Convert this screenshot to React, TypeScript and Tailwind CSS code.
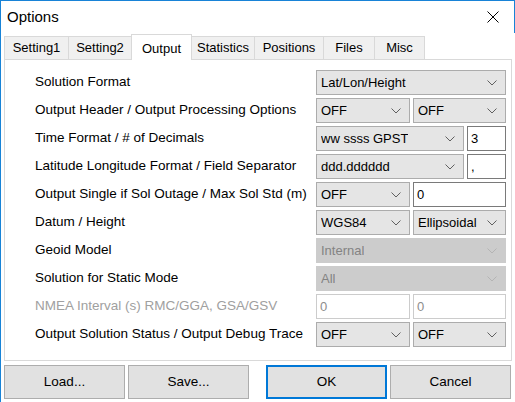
import { ReactNode } from 'react'

const font = { fontFamily: '"Liberation Sans", Arial, sans-serif' }

function Chevron({ disabled }: { disabled?: boolean }) {
  return (
    <svg width="10" height="6" viewBox="0 0 10 6" className="shrink-0">
      <path d="M0.5 0.5 L5 5 L9.5 0.5" fill="none" stroke={disabled ? '#b4b4b4' : '#606060'} strokeWidth="1" />
    </svg>
  )
}

function Combo({ value, disabled, className = '' }: { value: string; disabled?: boolean; className?: string }) {
  return (
    <div
      className={`h-[25px] flex items-center justify-between pl-[4px] pr-[8px] border ${
        disabled ? 'bg-[#cccccc] border-[#cccccc] text-[#838383]' : 'bg-[#e5e5e5] border-[#acacac] text-black'
      } ${className}`}
    >
      <span className="truncate">{value}</span>
      <Chevron disabled={disabled} />
    </div>
  )
}

function Field({ value, disabled, className = '' }: { value: string; disabled?: boolean; className?: string }) {
  return (
    <div
      className={`h-[25px] flex items-center pl-[3px] bg-white border ${
        disabled ? 'border-[#cccccc] text-[#8d8d8d]' : 'border-[#7a7a7a] text-black'
      } ${className}`}
    >
      {value}
    </div>
  )
}

const rows: { label: string; disabled?: boolean; control: ReactNode }[] = [
  { label: 'Solution Format', control: <Combo value="Lat/Lon/Height" className="w-full" /> },
  {
    label: 'Output Header / Output Processing Options',
    control: (
      <>
        <Combo value="OFF" className="w-[94px]" />
        <Combo value="OFF" className="flex-1" />
      </>
    ),
  },
  {
    label: 'Time Format / # of Decimals',
    control: (
      <>
        <Combo value="ww ssss GPST" className="flex-1" />
        <Field value="3" className="w-[39px]" />
      </>
    ),
  },
  {
    label: 'Latitude Longitude Format / Field Separator',
    control: (
      <>
        <Combo value="ddd.dddddd" className="flex-1" />
        <Field value="," className="w-[39px]" />
      </>
    ),
  },
  {
    label: 'Output Single if Sol Outage / Max Sol Std (m)',
    control: (
      <>
        <Combo value="OFF" className="w-[94px]" />
        <Field value="0" className="flex-1" />
      </>
    ),
  },
  {
    label: 'Datum / Height',
    control: (
      <>
        <Combo value="WGS84" className="w-[94px]" />
        <Combo value="Ellipsoidal" className="flex-1" />
      </>
    ),
  },
  { label: 'Geoid Model', control: <Combo value="Internal" disabled className="w-full" /> },
  { label: 'Solution for Static Mode', control: <Combo value="All" disabled className="w-full" /> },
  {
    label: 'NMEA Interval (s) RMC/GGA, GSA/GSV',
    disabled: true,
    control: (
      <>
        <Field value="0" disabled className="w-[94px]" />
        <Field value="0" disabled className="flex-1" />
      </>
    ),
  },
  {
    label: 'Output Solution Status / Output Debug Trace',
    control: (
      <>
        <Combo value="OFF" className="w-[94px]" />
        <Combo value="OFF" className="flex-1" />
      </>
    ),
  },
]

const tabs = [
  { name: 'Setting1', w: 'w-[65px]' },
  { name: 'Setting2', w: 'w-[64px]' },
  { name: 'Output', w: 'w-[61px]', active: true },
  { name: 'Statistics', w: 'w-[64px]' },
  { name: 'Positions', w: 'w-[70px]' },
  { name: 'Files', w: 'w-[52px]' },
  { name: 'Misc', w: 'w-[51px]' },
]

function Button({ label, primary }: { label: string; primary?: boolean }) {
  return (
    <button
      className={`w-[121px] h-[34px] bg-[#e1e1e1] text-black ${
        primary ? 'border-2 border-[#0078d7]' : 'border border-[#adadad]'
      }`}
    >
      {label}
    </button>
  )
}

export default function App() {
  return (
    <div
      style={font}
      className="w-[515px] h-[402px] bg-white border-l border-t border-[#1883d7] text-[13.5px] text-black flex flex-col overflow-hidden"
    >
      <div className="h-[32px] shrink-0 flex items-center justify-between pl-[6px] pr-[15px] border-r border-[#1883d7]">
        <span className="text-[15px]">Options</span>
        <svg width="12" height="12" viewBox="0 0 12 12">
          <path d="M0.5 0.5 L11.5 11.5 M11.5 0.5 L0.5 11.5" stroke="#000" strokeWidth="1" />
        </svg>
      </div>

      <div className="h-[26px] shrink-0 flex items-end pl-[3px] text-[13px]">
        {tabs.map((t) =>
          t.active ? (
            <div
              key={t.name}
              className={`${t.w} h-[26px] -ml-px -mb-px relative z-10 bg-white border border-b-0 border-[#d9d9d9] flex items-start justify-center pt-[4px]`}
            >
              {t.name}
            </div>
          ) : (
            <div
              key={t.name}
              className={`${t.w} h-[23px] -ml-px first:ml-0 bg-[#f0f0f0] border border-b-0 border-[#d9d9d9] flex items-center justify-center`}
            >
              {t.name}
            </div>
          ),
        )}
      </div>

      <div className="ml-[3px] w-[508px] h-[302px] shrink-0 bg-white border border-[#d9d9d9] pt-[10px] pl-[30px] pr-[5px] flex flex-col gap-[3px]">
        {rows.map((r) => (
          <div key={r.label} className="h-[25px] flex items-center">
            <span className={`flex-1 whitespace-nowrap ${r.disabled ? 'text-[#a0a0a0]' : ''}`}>{r.label}</span>
            <div className="w-[190px] flex gap-[3px] text-[13px]">{r.control}</div>
          </div>
        ))}
      </div>

      <div className="mt-[4px] ml-[3px] flex">
        <div className="flex gap-[3px]">
          <Button label="Load..." />
          <Button label="Save..." />
        </div>
        <div className="ml-[17px] flex gap-[3px]">
          <Button label="OK" primary />
          <Button label="Cancel" />
        </div>
      </div>
    </div>
  )
}
